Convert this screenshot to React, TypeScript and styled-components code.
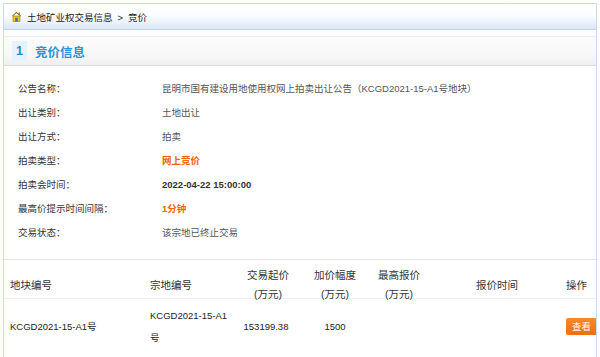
import React from "react";
import styled, { createGlobalStyle } from "styled-components";

const Global = createGlobalStyle`
  html, body { margin: 0; padding: 0; background: #fff; }
  body { font-family: "Liberation Sans", "Noto Sans CJK SC", sans-serif; color: #333; }
`;

const Panel = styled.div`
  margin: 3px;
  width: 592px;
  border-left: 1px solid #c6d9ee;
  border-right: 1px solid #c6d9ee;
  border-top: 1px solid #c6d9ee;
  min-height: 360px;
  overflow: hidden;
`;

const Crumb = styled.div`
  height: 25px;
  display: flex;
  align-items: center;
  gap: 5px;
  padding-left: 7px;
  font-size: 9.5px;
  color: #222;
  background: linear-gradient(to bottom, #ffffff 0%, #fbfdff 45%, #dbe8f6 100%);
  border-bottom: 1px solid #bfd3ea;
`;

const Sep = styled.span`
  margin: 0 5px;
`;

const Gap = styled.div`
  height: 6px;
  background: #fdfdfd;
`;

const SectionHead = styled.div`
  height: 28px;
  display: flex;
  align-items: center;
  gap: 8px;
  padding-left: 8px;
  background: linear-gradient(to bottom, #fbfbfb 0%, #f8f8f8 60%, #f0f0f0 100%);
  border-top: 1px solid #f0f0f0;
  border-bottom: 1px solid #dcdcdc;
`;

const Badge = styled.span`
  width: 15px;
  height: 20px;
  display: flex;
  align-items: center;
  justify-content: center;
  background: #e6f3fc;
  color: #1f8ad6;
  font-weight: bold;
  font-size: 12.5px;
`;

const SectionTitle = styled.span`
  color: #2a93dd;
  font-weight: bold;
  font-size: 12.5px;
`;

const Details = styled.div`
  padding: 10px 0 15px 14px;
`;

const DetailRow = styled.div`
  display: grid;
  grid-template-columns: 144px 1fr;
  height: 24px;
  align-items: center;
  font-size: 9.5px;
`;

const Label = styled.span`
  color: #333;
`;

const Value = styled.span<{ $tone?: "orange" | "bold" }>`
  color: ${(p) => (p.$tone === "orange" ? "#f0650a" : p.$tone === "bold" ? "#333" : "#555")};
  font-weight: ${(p) => (p.$tone ? "bold" : "normal")};
`;

const cols = "142px 90px 64px 70px 58px 138px 1fr";

const HeadRow = styled.div`
  display: grid;
  grid-template-columns: ${cols};
  height: 38px;
  border-top: 1px solid #e8e8e8;
  border-bottom: 1px solid #eceef1;
  font-size: 10.5px;
  color: #333;
`;

const HeadCell = styled.div<{ $lines?: number; $align?: "left" | "center"; $pl?: number; $pr?: number }>`
  padding-top: ${(p) => (p.$lines === 2 ? 6 : 16)}px;
  padding-left: ${(p) => p.$pl ?? 0}px;
  padding-right: ${(p) => p.$pr ?? 0}px;
  line-height: 19px;
  text-align: ${(p) => p.$align ?? "center"};
  white-space: nowrap;
`;

const DataRow = styled.div`
  display: grid;
  grid-template-columns: ${cols};
  align-items: center;
  padding: 6px 0;
  font-size: 9.5px;
  color: #222;
`;

const DataCell = styled.div<{ $align?: "left" | "center"; $pl?: number; $pr?: number }>`
  padding-left: ${(p) => p.$pl ?? 0}px;
  padding-right: ${(p) => p.$pr ?? 0}px;
  line-height: 22px;
  text-align: ${(p) => p.$align ?? "center"};
  word-break: break-all;
`;

const ViewButton = styled.button`
  width: 31px;
  height: 17px;
  padding: 0;
  border: none;
  border-radius: 2px;
  background: linear-gradient(to bottom, #f7892a 0%, #ee6f0e 100%);
  color: #fff;
  font-family: "Noto Sans CJK SC", sans-serif;
  font-size: 9.5px;
  line-height: 17px;
  cursor: pointer;
`;

const HomeIcon = () => (
  <svg width="11" height="11" viewBox="0 0 11 11">
    <path d="M5.5 0.8 L10.4 5.2 L9.2 5.2 L5.5 2 L1.8 5.2 L0.6 5.2 Z" fill="#9a5a00" />
    <rect x="2" y="5" width="7" height="5.5" fill="#f4c21a" stroke="#7a8a10" strokeWidth="0.6" />
    <rect x="4.3" y="6.8" width="2.4" height="3.7" fill="#2f6fc0" />
    <rect x="7.6" y="1.4" width="1.2" height="2.4" fill="#9a5a00" />
  </svg>
);

const details: { label: string; value: string; tone?: "orange" | "bold" }[] = [
  { label: "公告名称：", value: "昆明市国有建设用地使用权网上拍卖出让公告（KCGD2021-15-A1号地块）" },
  { label: "出让类别：", value: "土地出让" },
  { label: "出让方式：", value: "拍卖" },
  { label: "拍卖类型：", value: "网上竞价", tone: "orange" },
  { label: "拍卖会时间：", value: "2022-04-22 15:00:00", tone: "bold" },
  { label: "最高价提示时间间隔：", value: "1分钟", tone: "orange" },
  { label: "交易状态：", value: "该宗地已终止交易" },
];

export default function App() {
  return (
    <>
      <Global />
      <Panel>
        <Crumb>
          <HomeIcon />
          <span>
            土地矿业权交易信息<Sep>&gt;</Sep>竞价
          </span>
        </Crumb>
        <Gap />
        <SectionHead>
          <Badge>1</Badge>
          <SectionTitle>竞价信息</SectionTitle>
        </SectionHead>
        <Details>
          {details.map((d) => (
            <DetailRow key={d.label}>
              <Label>{d.label}</Label>
              <Value $tone={d.tone}>{d.value}</Value>
            </DetailRow>
          ))}
        </Details>
        <HeadRow>
          <HeadCell $align="left" $pl={6}>地块编号</HeadCell>
          <HeadCell $align="left" $pl={4}>宗地编号</HeadCell>
          <HeadCell $lines={2}>交易起价<br />(万元)</HeadCell>
          <HeadCell $lines={2}>加价幅度<br />(万元)</HeadCell>
          <HeadCell $lines={2}>最高报价<br />(万元)</HeadCell>
          <HeadCell>报价时间</HeadCell>
          <HeadCell $pr={11}>操作</HeadCell>
        </HeadRow>
        <DataRow>
          <DataCell $align="left" $pl={6}>KCGD2021-15-A1号</DataCell>
          <DataCell $align="left" $pl={4} $pr={4}>KCGD2021-15-A1号</DataCell>
          <DataCell $pr={4}>153199.38</DataCell>
          <DataCell>1500</DataCell>
          <DataCell></DataCell>
          <DataCell></DataCell>
          <DataCell $align="left">
            <ViewButton>查看</ViewButton>
          </DataCell>
        </DataRow>
      </Panel>
    </>
  );
}
